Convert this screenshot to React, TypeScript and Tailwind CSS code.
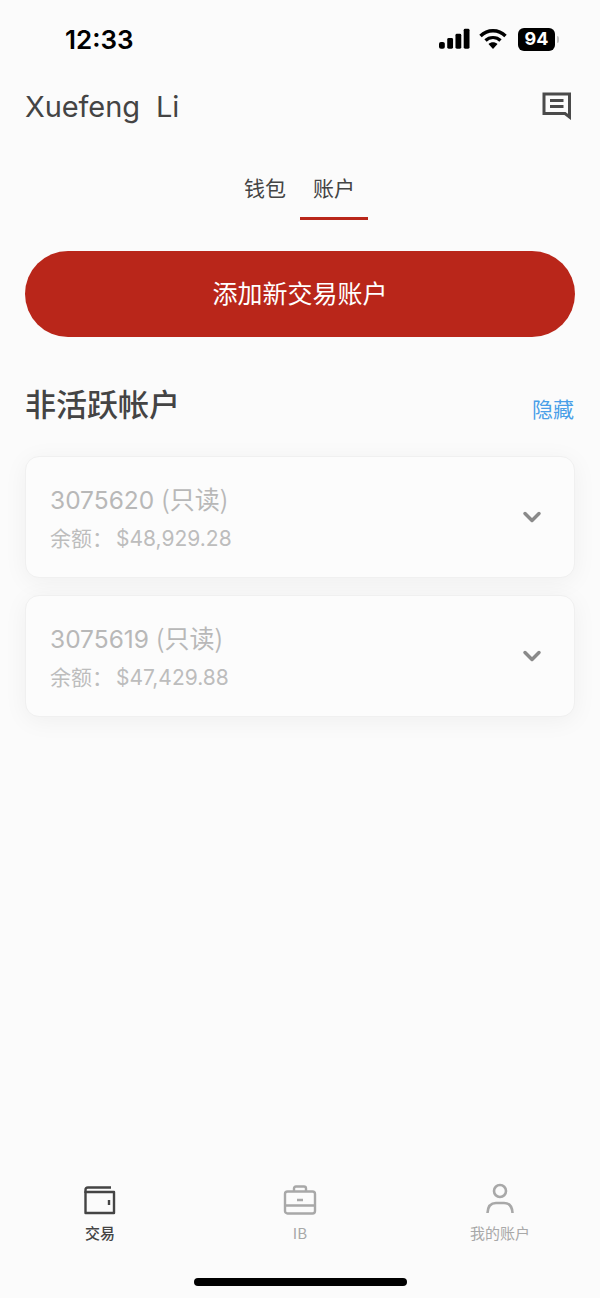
import { ChevronDown } from 'lucide-react';

const accounts = [
  { id: '3075620', balance: '$48,929.28' },
  { id: '3075619', balance: '$47,429.88' },
];

function StatusBar() {
  return (
    <div className="flex h-[78px] items-center justify-between pl-[65px] pr-[45px]">
      <span className="mt-[2px] font-['Inter',sans-serif] text-[26px] leading-[30px] font-semibold text-black">12:33</span>
      <div className="flex items-center">
        <svg width="31" height="22" viewBox="0 0 32 22" className="fill-black">
          <rect x="0" y="14" width="6" height="7" rx="2" />
          <rect x="8.5" y="10" width="6" height="11" rx="1.5" />
          <rect x="17" y="5.5" width="6" height="15.5" rx="1.5" />
          <rect x="25.5" y="0.5" width="6" height="20.5" rx="1.5" />
        </svg>
        <svg width="28" height="22" viewBox="0 0 28 22" className="ml-[9px]">
          <path d="M1.5 8 C8.5 1 19.5 1 26.5 8" fill="none" stroke="#000" strokeWidth="3.4" />
          <path d="M6.5 12.5 C10.5 8.5 17.5 8.5 21.5 12.5" fill="none" stroke="#000" strokeWidth="3.2" />
          <path d="M9.5 16 C12 13.5 16 13.5 18.5 16 L14 21 Z" fill="#000" />
        </svg>
        <div className="relative ml-[11px] flex h-[23px] w-[37px] items-center justify-center rounded-[6px] bg-black font-['Inter',sans-serif] text-[18px] leading-none font-bold text-white">
          94
          <span className="absolute -right-[4px] top-[8px] h-[7px] w-[2px] rounded-r-sm bg-[#c4c4c4]" />
        </div>
      </div>
    </div>
  );
}

function Header() {
  return (
    <div className="flex h-[58px] items-center justify-between pl-[25px] pr-[28px]">
      <span className="font-['Inter',sans-serif] text-[29px] leading-[36px] tracking-[-0.1px] whitespace-pre text-[#444]">Xuefeng  Li</span>
      <svg width="30" height="28" viewBox="0 0 30 28" fill="none" stroke="#4a4a4a" strokeWidth="3" className="-mt-[2px]">
        <path d="M2 2 H27.5 V25 L23 21.5 H2 Z" />
        <path d="M8 8.5 H21.5 M8 14.5 H21.5" />
      </svg>
    </div>
  );
}

function Tabs() {
  return (
    <div className="mt-[29px] flex h-[55px] justify-center text-[21px] leading-[30px] text-[#444]">
      <div className="w-[68px] pt-[7px] pr-[2px] text-center">钱包</div>
      <div className="flex w-[68px] flex-col items-center justify-between pt-[7px]">
        <span>账户</span>
        <span className="h-[3px] w-full bg-[#b9261a]" />
      </div>
    </div>
  );
}

function AccountCard({ id, balance }: { id: string; balance: string }) {
  return (
    <div className="flex h-[122px] items-center justify-between rounded-[14px] border border-[#f0f0f0] bg-[#fcfcfc] pl-[24px] pr-[28px] shadow-[0_4px_24px_rgba(0,0,0,0.05)]">
      <div>
        <div className="flex items-baseline text-[#b8b8b8]">
          <span className="font-['Inter',sans-serif] text-[24.5px] leading-[34px]">{id}</span>
          <span className="ml-[7px] text-[25px] leading-[34px]">(只读)</span>
        </div>
        <div className="mt-[5px] flex items-baseline text-[#bdbdbd]">
          <span className="text-[21px] leading-[30px]">余额：</span>
          <span className="ml-[3px] font-['Inter',sans-serif] text-[21px] leading-[30px]">{balance}</span>
        </div>
      </div>
      <ChevronDown className="-mt-[1px] h-[28px] w-[28px] text-[#8a8a8a]" strokeWidth={3} />
    </div>
  );
}

function NavBar() {
  return (
    <div className="grid grid-cols-3">
      <div className="flex flex-col items-center">
        <svg width="34" height="30" viewBox="0 0 34 30" fill="none" stroke="#444" strokeWidth="2.4">
          <path d="M2.5 8 V5 Q2.5 2.5 5 2.5 H28" />
          <path d="M2.5 7 H31 V28 H2.5 Z" strokeLinejoin="round" />
          <path d="M26 15 V20" />
        </svg>
        <span className="mt-[8px] text-[15px] leading-[20px] font-medium text-[#444]">交易</span>
      </div>
      <div className="flex flex-col items-center">
        <svg width="34" height="30" viewBox="0 0 34 30" fill="none" stroke="#a8a8a8" strokeWidth="2.4">
          <rect x="2" y="6.5" width="30" height="22" rx="2.5" />
          <path d="M11 6.5 V3.5 Q11 1.5 13 1.5 H21 Q23 1.5 23 3.5 V6.5" />
          <path d="M2 20.5 H32 M14 15 H20" />
        </svg>
        <span className="mt-[8px] text-[15px] leading-[20px] text-[#a8a8a8]">IB</span>
      </div>
      <div className="flex flex-col items-center">
        <svg width="30" height="32" viewBox="0 0 30 32" fill="none" stroke="#a8a8a8" strokeWidth="2.6" className="-mt-[2px]">
          <circle cx="15" cy="8" r="6" />
          <path d="M2.5 30 Q3 20 11 20 H19 Q27 20 27.5 30" />
        </svg>
        <span className="mt-[8px] text-[15px] leading-[20px] text-[#a8a8a8]">我的账户</span>
      </div>
    </div>
  );
}

export default function App() {
  return (
    <div className="flex h-[1298px] w-[600px] flex-col overflow-hidden bg-[#fbfbfb] font-['Noto_Sans_CJK_SC',sans-serif]">
      <StatusBar />
      <Header />
      <Tabs />

      <div className="mt-[31px] px-[25px]">
        <button className="flex h-[86px] w-full items-center justify-center rounded-full bg-[#b9261a] pb-[2px] text-[25px] text-white">
          添加新交易账户
        </button>

        <div className="mt-[42px] flex items-start justify-between pr-[1px]">
          <span className="text-[31px] leading-[48px] font-medium text-[#444]">非活跃帐户</span>
          <span className="mt-[13px] text-[21px] leading-[32px] text-[#4a9fe8]">隐藏</span>
        </div>

        <div className="mt-[29px] flex flex-col gap-[17px]">
          {accounts.map((a) => (
            <AccountCard key={a.id} id={a.id} balance={a.balance} />
          ))}
        </div>
      </div>

      <div className="mt-auto">
        <NavBar />
        <div className="mt-[35px] mb-[12px] flex justify-center">
          <div className="h-[8px] w-[213px] rounded-full bg-black" />
        </div>
      </div>
    </div>
  );
}
